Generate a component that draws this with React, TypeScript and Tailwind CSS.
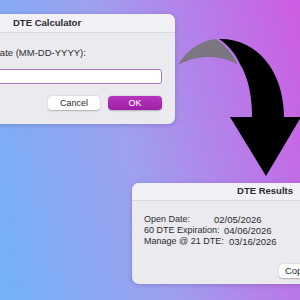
import React from "react";

const RESULTS = [
  { label: "Open Date:", value: "02/05/2026", w: "w-[70px]" },
  { label: "60 DTE Expiration:", value: "04/06/2026", w: "w-[80px]" },
  { label: "Manage @ 21 DTE:", value: "03/16/2026", w: "w-[85px]" },
];

function CurvedArrow() {
  return (
    <svg
      className="pointer-events-none absolute left-0 top-0"
      width={300}
      height={300}
      viewBox="0 0 300 300"
    >
      {/* back of the curl, in grey */}
      <path
        d="M178 65 C187 49 203 40 216 39 C225 45 233 54 238 65 C222 55 198 54 178 65 Z"
        fill="#7b7682"
      />
      {/* front of the curl with the head */}
      <path
        d="M219 39 C256 38 284 70 284 117 L301 117 L266 176 L230 117 L252 117 C252 95 248 77 240 64 C235 53 228 45 219 39 Z"
        fill="#000"
      />
    </svg>
  );
}

function CalculatorDialog() {
  return (
    <div className="absolute left-[-12px] top-[14px] flex h-[110px] w-[187px] flex-col overflow-hidden rounded-[7px] bg-[#ebeaef] shadow-[0_1px_4px_rgba(60,40,90,0.25)]">
      <div className="flex h-[19px] items-center border-b border-[#d9d8de] bg-[#f1f0f4] pl-[25px] text-[9.5px] font-bold text-[#2b2b2e]">
        DTE Calculator
      </div>
      <p className="mt-[14px] pl-[5px] text-[9.5px] leading-[11px] text-[#2b2b2e]">Date (MM-DD-YYYY):</p>
      <div className="ml-[4px] mr-[13px] mt-[11px] h-[15px] rounded-[3px] border-[1.5px] border-[#a57bc5] bg-white" />
      <div className="mt-[12px] flex justify-end gap-[8px] pr-[13px]">
        <button className="h-[14px] w-[52px] rounded-[4px] bg-white text-[9px] leading-[14px] text-[#2b2b2e] shadow-[0_0.5px_1.5px_rgba(0,0,0,0.25)]">
          Cancel
        </button>
        <button className="h-[14px] w-[54px] rounded-[4px] bg-[linear-gradient(#b637bd,#9d1fa6)] text-[9px] leading-[14px] text-white shadow-[0_0.5px_1.5px_rgba(0,0,0,0.25)]">
          OK
        </button>
      </div>
    </div>
  );
}

function ResultsDialog() {
  return (
    <div className="absolute left-[132px] top-[183px] flex h-[101px] w-[180px] flex-col overflow-hidden rounded-[7px] bg-[#ebeaef] shadow-[0_1px_4px_rgba(60,40,90,0.25)]">
      <div className="flex h-[18px] items-center justify-end border-b border-[#d9d8de] bg-[#f1f0f4] pr-[19px] text-[9.5px] font-bold text-[#2b2b2e]">
        DTE Results
      </div>
      <div className="mt-[13px] pl-[12px] text-[9px] leading-[11px] text-[#2b2b2e]">
        {RESULTS.map((r) => (
          <div key={r.label} className="flex whitespace-nowrap">
            <span className={r.w}>{r.label}</span>
            <span className="text-[9.5px]">{r.value}</span>
          </div>
        ))}
      </div>
      <div className="mt-[10px] pl-[147px]">
        <button className="h-[14px] w-[34px] rounded-[4px] bg-white text-[9.5px] leading-[14px] text-[#2b2b2e] shadow-[0_0.5px_1.5px_rgba(0,0,0,0.25)]">
          Copy
        </button>
      </div>
    </div>
  );
}

export default function App() {
  return (
    <div className="relative h-[300px] w-[300px] overflow-hidden bg-[linear-gradient(75deg,#72b2f8_0%,#9ea0ef_45%,#cd5ce2_100%)] [font-family:'Liberation_Sans',Arial,sans-serif]">
      <CurvedArrow />
      <CalculatorDialog />
      <ResultsDialog />
    </div>
  );
}
